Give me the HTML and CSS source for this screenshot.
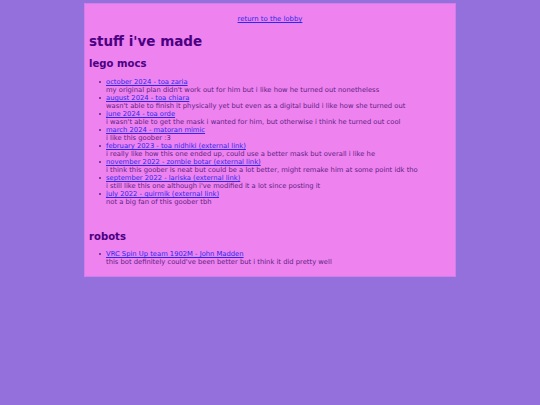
FILE: index.html
```html
<!DOCTYPE html>
<html>
<head>
<meta charset="utf-8">
<link rel="stylesheet" href="styles.css">
</head>
<body>
<div class="page">
  <p class="lobby"><a href="#">return to the lobby</a></p>
  <h1 class="title">stuff i've made</h1>
  <h2 class="section">lego mocs</h2>
  <ul class="list">
    <li><a href="#">october 2024 - toa zaria</a><br>my original plan didn't work out for him but i like how he turned out nonetheless</li>
    <li><a href="#">august 2024 - toa chiara</a><br>wasn't able to finish it physically yet but even as a digital build i like how she turned out</li>
    <li><a href="#">june 2024 - toa orde</a><br>i wasn't able to get the mask i wanted for him, but otherwise i think he turned out cool</li>
    <li><a href="#">march 2024 - matoran mimic</a><br>i like this goober :3</li>
    <li><a href="#">february 2023 - toa nidhiki (external link)</a><br>i really like how this one ended up, could use a better mask but overall i like he</li>
    <li><a href="#">november 2022 - zombie botar (external link)</a><br>i think this goober is neat but could be a lot better, might remake him at some point idk tho</li>
    <li><a href="#">september 2022 - lariska (external link)</a><br>i still like this one although i've modified it a lot since posting it</li>
    <li><a href="#">july 2022 - quirmik (external link)</a><br>not a big fan of this goober tbh</li>
  </ul>
  <h2 class="section robots">robots</h2>
  <ul class="list">
    <li><a href="#">VRC Spin Up team 1902M - John Madden</a><br>this bot definitely could've been better but i think it did pretty well</li>
  </ul>
</div>
</body>
</html>
```
FILE: styles.css
```css
html, body {
  margin: 0;
  padding: 0;
}
body {
  background: #9370db;
  padding-top: 3px;
  font-family: "DejaVu Sans", Verdana, sans-serif;
  color: #5e2284;
}
.page {
  width: 362px;
  margin: 0 auto;
  background: #ee82ee;
  border: 1px solid #cf7fe9;
  padding: 11px 4px 10px 4px;
}
.page a {
  color: #2a2aee;
}
.lobby {
  margin: 0;
  text-align: center;
  font-size: 6.9px;
  line-height: 8px;
}
.title {
  margin: 10px 0 0 0;
  font-size: 13.5px;
  line-height: 16px;
  color: #4b0082;
}
.section {
  margin: 9px 0 0 0;
  font-size: 10.1px;
  line-height: 12px;
  color: #4b0082;
}
.robots {
  margin-top: 24.5px;
}
.list {
  margin: 8px 0 0 0;
  padding-left: 17px;
  font-size: 6.78px;
  line-height: 8px;
  list-style: none;
}
.list li::before {
  content: "";
  display: inline-block;
  width: 2px;
  height: 2px;
  border-radius: 50%;
  background: #5e2284;
  margin-left: -7px;
  margin-right: 5px;
  vertical-align: 1.5px;
}
.robots + .list {
  margin-top: 7.5px;
}
```
